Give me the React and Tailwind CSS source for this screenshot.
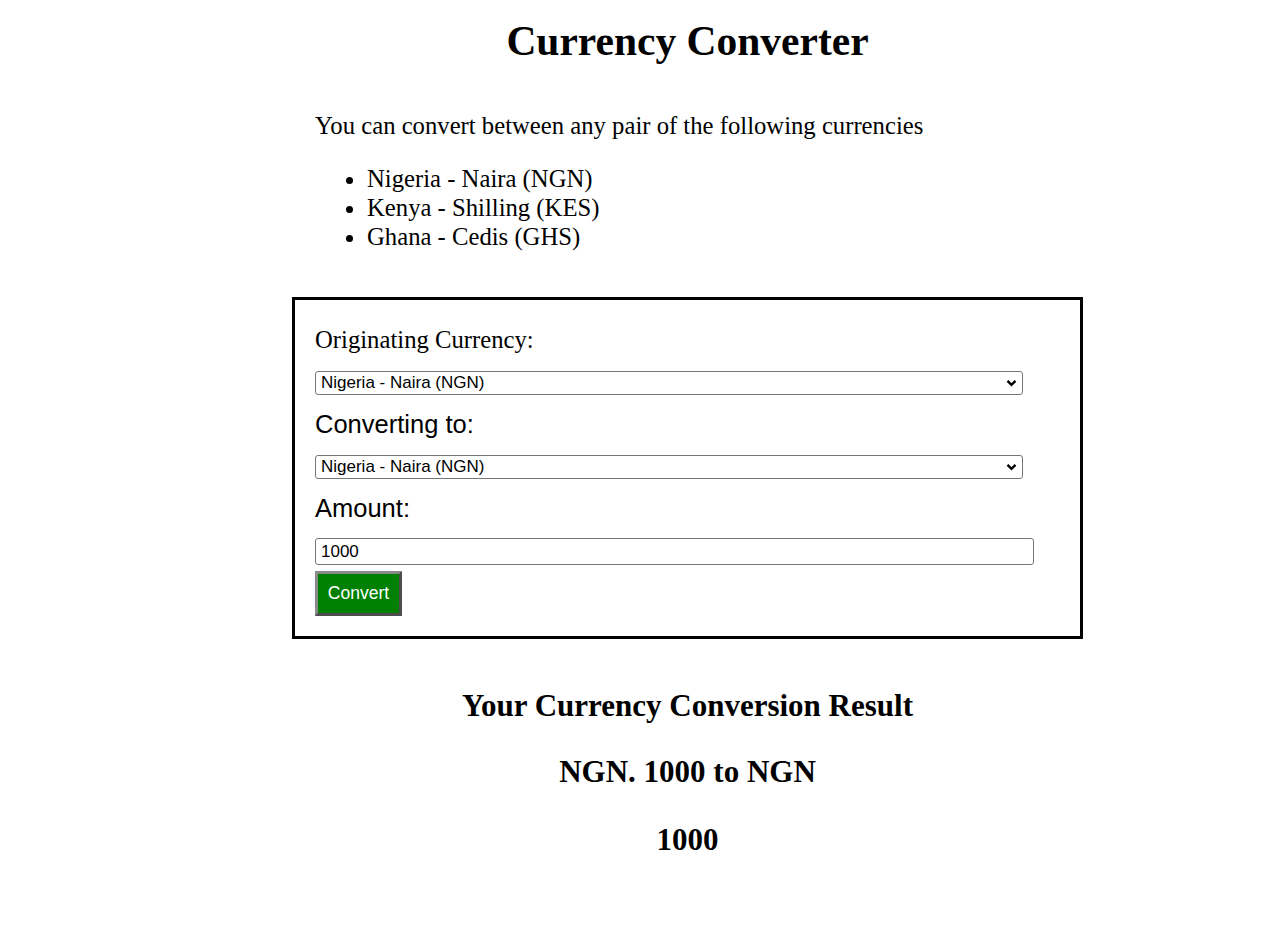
import React, { useState } from 'react';

const currencies = [
  { code: 'NGN', label: 'Nigeria - Naira (NGN)' },
  { code: 'KES', label: 'Kenya - Shilling (KES)' },
  { code: 'GHS', label: 'Ghana - Cedis (GHS)' },
];

// Bold chevron like the native select arrow in the screenshot
const Chevron = () => (
  <svg
    className="pointer-events-none absolute right-[6px] top-1/2 -translate-y-1/2"
    width="11"
    height="8"
    viewBox="0 0 11 8"
  >
    <path d="M1.5 1.8 L5.5 5.8 L9.5 1.8" fill="none" stroke="#000" strokeWidth="2.4" />
  </svg>
);

const CurrencySelect = ({ value, onChange }) => (
  <div className="relative w-[708px] h-[24px]">
    <select
      value={value}
      onChange={(e) => onChange(e.target.value)}
      className="appearance-none w-full h-full bg-white border border-[#767676] rounded-[3px] pl-[5px] pr-6 text-[17px] leading-[22px] text-black font-['Liberation_Sans',Arial,sans-serif] outline-none"
    >
      {currencies.map((c) => (
        <option key={c.code} value={c.code}>
          {c.label}
        </option>
      ))}
    </select>
    <Chevron />
  </div>
);

export default function App() {
  const [from, setFrom] = useState('NGN');
  const [to, setTo] = useState('NGN');
  const [amount, setAmount] = useState('1000');

  return (
    <div className="min-h-screen bg-white text-black font-['Liberation_Serif','Times_New_Roman',serif]">
      <div className="ml-[292px] w-[791px] pb-10">
        <h1 className="pt-[17px] text-center text-[41.5px] leading-[48px] font-bold">
          Currency Converter
        </h1>

        <div className="pl-[23px]">
          <p className="mt-[47px] text-[24.7px] leading-[28px]">
            You can convert between any pair of the following currencies
          </p>
          <ul className="mt-[24px] list-disc pl-[52px] text-[24.7px] leading-[29px]">
            {currencies.map((c) => (
              <li key={c.code}>{c.label}</li>
            ))}
          </ul>
        </div>

        <form
          className="mt-[46px] border-[3px] border-black pl-[20px] pt-[26px] pb-[20px]"
          onSubmit={(e) => e.preventDefault()}
        >
          <label className="block text-[24.7px] leading-[28px] mb-[17px]">
            Originating Currency:
          </label>
          <CurrencySelect value={from} onChange={setFrom} />

          <label className="block mt-[15px] mb-[17px] text-[25.5px] leading-[28px] font-['Liberation_Sans',Arial,sans-serif]">
            Converting to:
          </label>
          <CurrencySelect value={to} onChange={setTo} />

          <label className="block mt-[15px] mb-[16px] text-[25.5px] leading-[28px] font-['Liberation_Sans',Arial,sans-serif]">
            Amount:
          </label>
          <input
            type="text"
            value={amount}
            onChange={(e) => setAmount(e.target.value)}
            className="block w-[719px] h-[27px] border border-[#767676] rounded-[3px] pl-[5px] text-[17px] leading-[25px] font-['Liberation_Sans',Arial,sans-serif] outline-none"
          />
          <button
            type="submit"
            className="mt-[6px] w-[87px] h-[45px] bg-[#008000] text-white text-[17.5px] font-['Liberation_Sans',Arial,sans-serif] border-[3px] border-t-[#8a8a8a] border-l-[#8a8a8a] border-b-[#4d4d4d] border-r-[#4d4d4d]"
          >
            Convert
          </button>
        </form>

        <div className="text-center font-bold text-[31px] leading-[36px]">
          <h2 className="mt-[49px]">Your Currency Conversion Result</h2>
          <h2 className="mt-[30px]">
            {from}. {amount} to {to}
          </h2>
          <h2 className="mt-[32px]">{amount}</h2>
        </div>
      </div>
    </div>
  );
}
